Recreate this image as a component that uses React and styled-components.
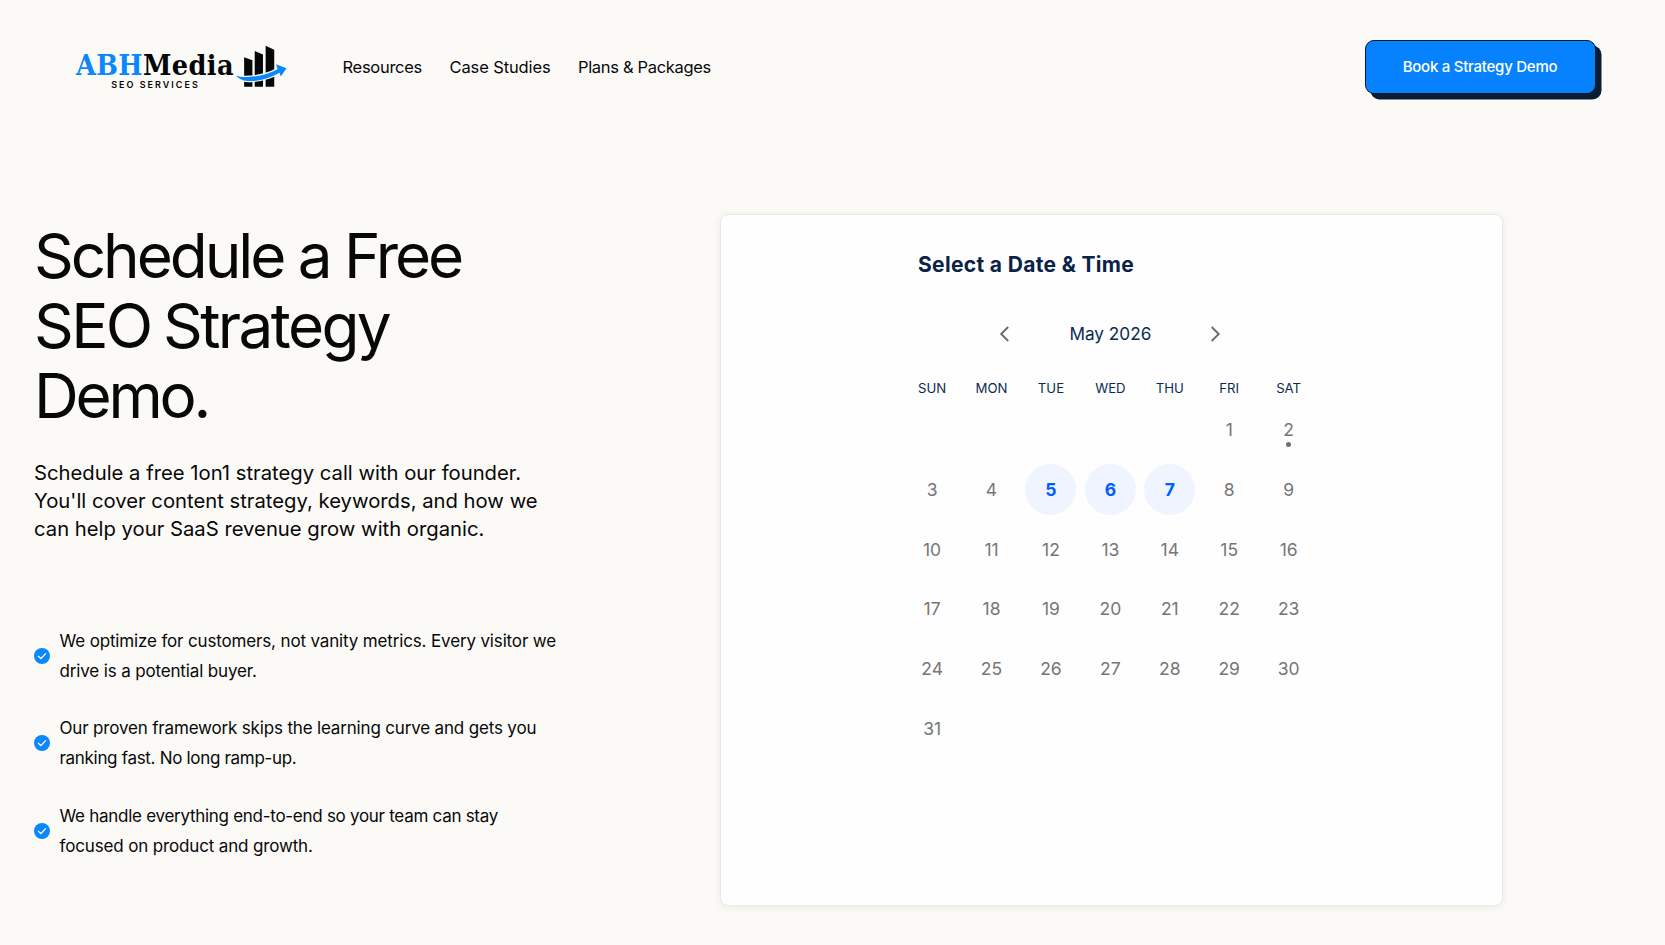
import React from "react";
import styled, { createGlobalStyle } from "styled-components";

const WEEKDAYS = ["SUN", "MON", "TUE", "WED", "THU", "FRI", "SAT"];
const FIRST_WEEKDAY = 5;
const DAYS = Array.from({ length: 31 }, (_, i) => i + 1);
const AVAILABLE = [5, 6, 7];
const TODAY = 2;

const BENEFITS = [
  [
    { text: "We optimize for customers, not vanity metrics. Every visitor we" },
    { text: "drive is a potential buyer." },
  ],
  [
    {
      text: "Our proven framework skips the learning curve and gets you",
      spacing: "-0.17px",
    },
    { text: "ranking fast. No long ramp-up.", spacing: "-0.31px" },
  ],
  [
    {
      text: "We handle everything end-to-end so your team can stay",
      spacing: "-0.28px",
    },
    { text: "focused on product and growth." },
  ],
];

export default () => {
  return (
    <Page>
      <GlobalStyle />
      <Header>
        <Logo href="#">
          <LogoWords>
            <LogoName>
              <span>ABH</span>Media
            </LogoName>
            <LogoTagline>SEO SERVICES</LogoTagline>
          </LogoWords>
          <LogoMark />
        </Logo>
        <Nav>
          <NavItem href="#" $width={79} $spacing="-0.28px">
            Resources
          </NavItem>
          <NavItem href="#" $width={100.5} $spacing="-0.12px">
            Case Studies
          </NavItem>
          <NavItem href="#" $width={133} $spacing="-0.33px">
            Plans &amp; Packages
          </NavItem>
        </Nav>
        <DemoButton>Book a Strategy Demo</DemoButton>
      </Header>
      <Main>
        <Intro>
          <Title>
            <Line $spacing="-3.05px">Schedule a Free</Line>
            <Line $spacing="-2.6px" $wordSpacing="-2.5px">
              SEO Strategy
            </Line>
            <Line $spacing="-3.2px">Demo.</Line>
          </Title>
          <Lead>
            <Line>Schedule a free 1on1 strategy call with our founder.</Line>
            <Line>You'll cover content strategy, keywords, and how we</Line>
            <Line>can help your SaaS revenue grow with organic.</Line>
          </Lead>
          <Benefits>
            {BENEFITS.map((lines) => (
              <Benefit key={lines[0].text}>
                <Check />
                <div>
                  {lines.map(({ text, spacing }) => (
                    <Line key={text} $spacing={spacing}>
                      {text}
                    </Line>
                  ))}
                </div>
              </Benefit>
            ))}
          </Benefits>
        </Intro>
        <Card>
          <Calendar>
            <CalendarTitle>Select a Date &amp; Time</CalendarTitle>
            <MonthBar>
              <Chevron d="M9.2 1 2.2 8l7 7" />
              <Month>May 2026</Month>
              <Chevron d="M.7 1 7.7 8l-7 7" />
            </MonthBar>
            <Grid>
              {WEEKDAYS.map((day) => (
                <Weekday key={day}>{day}</Weekday>
              ))}
            </Grid>
            <Grid>
              {DAYS.map((day) => (
                <Day
                  key={day}
                  $start={day === 1 ? FIRST_WEEKDAY + 1 : undefined}
                  $available={AVAILABLE.includes(day)}
                  $today={day === TODAY}
                >
                  <span>{day}</span>
                </Day>
              ))}
            </Grid>
          </Calendar>
        </Card>
      </Main>
    </Page>
  );
};

const LogoMark = () => (
  <LogoSvg viewBox="0 0 156 130">
    <g fill="#050607">
      <path d="M27 37 52 46V126H27z" />
      <path d="M59 18 84 29V126H59z" />
      <path d="M92 2 118 14V126H92z" />
    </g>
    <path
      d="M2 92c12 5 26 5 42 4 34-2 61-11 84-23l-4-15 31 12-17 25-4-11c-26 15-55 24-86 25-18 1-35-4-46-17z"
      fill="#0a88fb"
      stroke="#fbfaf7"
      strokeWidth="7"
      paintOrder="stroke"
    />
  </LogoSvg>
);

const Check = () => (
  <CheckSvg viewBox="0 0 16 16">
    <circle cx="8" cy="8" r="8" fill="#0a88fb" />
    <path
      d="M4.3 8.2 6.9 10.6 11.6 5.6"
      fill="none"
      stroke="#fff"
      strokeWidth="1.3"
      strokeLinecap="round"
      strokeLinejoin="round"
    />
  </CheckSvg>
);

const Chevron = ({ d }) => (
  <ChevronSvg viewBox="0 0 10 16">
    <path d={d} fill="none" stroke="#6b6b6b" strokeWidth="1.9" />
  </ChevronSvg>
);

const GlobalStyle = createGlobalStyle`
  * {
    box-sizing: border-box;
  }

  body {
    margin: 0;
    background-color: #fbfaf7;
    color: #080808;
    font-family: Inter, "Liberation Sans", sans-serif;
  }

  h1, h2, p, ul {
    margin: 0;
    padding: 0;
    font-weight: 400;
  }
`;

const Page = styled.div`
  height: 945px;
  overflow: hidden;
`;

const Header = styled.header`
  height: 214px;
  padding: 40px 69px 0 76px;
  display: flex;
  align-items: flex-start;
`;

const Logo = styled.a`
  width: 212px;
  height: 54px;
  display: flex;
  color: #050607;
  text-decoration: none;
`;

const LogoWords = styled.div`
  width: 159px;
  flex: none;
  display: flex;
  flex-direction: column;
  align-items: center;
`;

const LogoName = styled.div`
  height: 40px;
  padding-top: 8px;
  align-self: flex-start;
  white-space: nowrap;
  font: 700 28.5px/34px "DejaVu Serif Condensed", "DejaVu Serif", serif;
  font-stretch: condensed;
  letter-spacing: 0.4px;

  span {
    color: #0a88fb;
  }
`;

const LogoTagline = styled.div`
  font-size: 9px;
  line-height: 9px;
  font-weight: 600;
  letter-spacing: 2px;
  white-space: nowrap;
`;

const LogoSvg = styled.svg`
  flex: none;
  width: 52px;
  height: 43px;
  margin-top: 5px;
`;

const Nav = styled.nav`
  margin: 15px auto 0 54.5px;
  display: flex;
  gap: 28px;
`;

const NavItem = styled.a`
  width: ${({ $width }) => $width}px;
  font-size: 16.5px;
  line-height: 24px;
  letter-spacing: ${({ $spacing }) => $spacing};
  white-space: nowrap;
  color: inherit;
  text-decoration: none;
`;

const DemoButton = styled.button`
  width: 231px;
  height: 54px;
  padding: 0 1px 0 0;
  border: 1.5px solid #07192c;
  border-radius: 9px;
  box-shadow: 5.5px 5.5px 0 #0b1d33;
  background-color: #0782ff;
  color: white;
  font: 500 15px/20px Inter, sans-serif;
  letter-spacing: -0.25px;
`;

const Main = styled.main`
  display: flex;
  align-items: flex-start;
`;

const Intro = styled.section`
  width: 720px;
  padding-left: 34px;
`;

const Line = styled.span`
  display: block;
  white-space: nowrap;
  letter-spacing: ${({ $spacing }) => $spacing || "inherit"};
  word-spacing: ${({ $wordSpacing }) => $wordSpacing || "normal"};
`;

const Title = styled.h1`
  padding-top: 6.5px;
  font-size: 62px;
  line-height: 70px;
`;

const Lead = styled.p`
  margin-top: 28.5px;
  font-size: 20.25px;
  line-height: 28px;
`;

const Benefits = styled.ul`
  margin-top: 83px;
  display: flex;
  flex-direction: column;
  gap: 27.4px;
  list-style: none;
`;

const Benefit = styled.li`
  display: flex;
  align-items: center;
  gap: 9.5px;
  font-size: 17px;
  line-height: 30px;
  letter-spacing: -0.15px;
`;

const CheckSvg = styled.svg`
  flex: none;
  width: 16px;
  height: 16px;
`;

const Card = styled.section`
  width: 783px;
  height: 692px;
  border: 1px solid #e9e9e8;
  border-radius: 8px;
  box-shadow: 0 1px 8px rgba(0, 0, 0, 0.07);
  background-color: #fefefe;
`;

const Calendar = styled.div`
  width: 416px;
  margin: 35px auto 0 181.4px;
`;

const CalendarTitle = styled.h2`
  padding-left: 15.6px;
  font-size: 21px;
  line-height: 29px;
  font-weight: 700;
  letter-spacing: 0.34px;
  color: #0a2247;
`;

const MonthBar = styled.div`
  height: 24px;
  margin-top: 42.5px;
  display: flex;
  justify-content: center;
  align-items: center;
  gap: 60px;
`;

const Month = styled.div`
  width: 82px;
  text-align: center;
  white-space: nowrap;
  font-size: 17.2px;
  color: #0a2b52;
`;

const ChevronSvg = styled.svg`
  width: 10px;
  height: 16px;
`;

const Grid = styled.div`
  display: grid;
  grid-template-columns: repeat(7, 59.43px);
`;

const Weekday = styled.div`
  margin-top: 32.5px;
  height: 26.3px;
  text-align: center;
  font-size: 13.2px;
  line-height: 20px;
  color: #0a2b52;
`;

const Day = styled.div`
  grid-column-start: ${({ $start }) => $start};
  height: 59.65px;
  position: relative;
  display: flex;
  justify-content: center;
  align-items: flex-start;
  color: ${({ $available }) => ($available ? "#0060ff" : "#767676")};
  font-size: 17.5px;
  font-weight: ${({ $available }) => ($available ? 700 : 400)};

  span {
    width: 51px;
    height: 51px;
    border-radius: 50%;
    text-align: center;
    line-height: 51px;
    background-color: ${({ $available }) =>
      $available ? "#eff4ff" : "transparent"};
  }

  &::after {
    content: "";
    display: ${({ $today }) => ($today ? "block" : "none")};
    position: absolute;
    top: 38px;
    width: 5px;
    height: 5px;
    border-radius: 50%;
    background-color: #6f6f6f;
  }
`;
